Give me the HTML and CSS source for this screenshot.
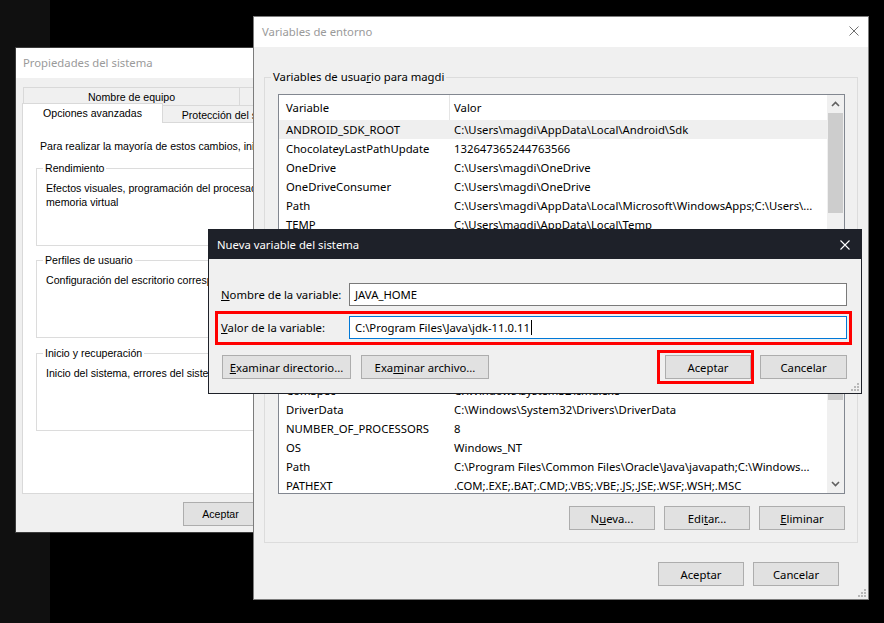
FILE: index.html
```html
<!DOCTYPE html>
<html lang="es">
<head>
<meta charset="utf-8">
<title>Variables de entorno</title>
<link rel="stylesheet" href="styles.css">
</head>
<body>
<div class="desktop">

  <section class="win sysprops">
    <header class="titlebar light sp-title"><span class="title inactive">Propiedades del sistema</span></header>
    <div class="sp-body">
      <div class="tabrow back">
        <div class="tab t-equipo">Nombre de equipo</div>
        <div class="tab t-hw">Hardware</div>
      </div>
      <div class="tabrow front">
        <div class="tab selected">Opciones avanzadas</div>
        <div class="tab t-prot">Protección del sistema</div>
        <div class="tab t-rem">Acceso remoto</div>
      </div>
      <div class="tabpanel">
        <p class="intro">Para realizar la mayoría de estos cambios, inicie sesión como administrador.</p>
        <div class="gbox wgbox g-rend">
          <div class="gtitle">Rendimiento</div>
          <p class="gtext">Efectos visuales, programación del procesador, uso de memoria y<br>memoria virtual</p>
        </div>
        <div class="gbox wgbox g-perf">
          <div class="gtitle">Perfiles de usuario</div>
          <p class="gtext">Configuración del escritorio correspondiente a su inicio de sesión</p>
        </div>
        <div class="gbox wgbox g-ini">
          <div class="gtitle">Inicio y recuperación</div>
          <p class="gtext">Inicio del sistema, errores del sistema e información de depuración</p>
        </div>
      </div>
      <div class="sp-footer">
        <button class="btn sbtn">Aceptar</button>
        <button class="btn sbtn">Cancelar</button>
        <button class="btn sbtn">Aplicar</button>
      </div>
    </div>
  </section>

  <section class="win envwin">
    <header class="titlebar light env-title">
      <span class="title inactive">Variables de entorno</span>
      <svg class="xicon" width="10" height="10" viewBox="0 0 10 10"><path d="M0.5 0.5 L9.5 9.5 M9.5 0.5 L0.5 9.5" stroke="#707070" stroke-width="1" fill="none"/></svg>
    </header>
    <div class="env-body">
      <div class="gbox egbox g-user">
        <div class="gtitle">Variables de usua<u>r</u>io para magdi</div>
        <div class="listview lv-user">
          <div class="lv-main">
            <div class="lv-head"><div class="c1">Variable</div><div class="c2">Valor</div></div>
            <div class="lv-row sel"><div class="c1">ANDROID_SDK_ROOT</div><div class="c2">C:\Users\magdi\AppData\Local\Android\Sdk</div></div>
            <div class="lv-row"><div class="c1">ChocolateyLastPathUpdate</div><div class="c2">132647365244763566</div></div>
            <div class="lv-row"><div class="c1">OneDrive</div><div class="c2">C:\Users\magdi\OneDrive</div></div>
            <div class="lv-row"><div class="c1">OneDriveConsumer</div><div class="c2">C:\Users\magdi\OneDrive</div></div>
            <div class="lv-row"><div class="c1">Path</div><div class="c2">C:\Users\magdi\AppData\Local\Microsoft\WindowsApps;C:\Users\...</div></div>
            <div class="lv-row"><div class="c1">TEMP</div><div class="c2">C:\Users\magdi\AppData\Local\Temp</div></div>
            <div class="lv-row"><div class="c1">TMP</div><div class="c2">C:\Users\magdi\AppData\Local\Temp</div></div>
          </div>
          <div class="vscroll">
            <div class="arrow"><svg width="9" height="6" viewBox="0 0 9 6"><path d="M1 5 L4.5 1.5 L8 5" fill="none" stroke="#606060" stroke-width="1.6"/></svg></div>
            <div class="track"><div class="thumb thumb-user"></div></div>
            <div class="arrow"><svg width="9" height="6" viewBox="0 0 9 6"><path d="M1 1 L4.5 4.5 L8 1" fill="none" stroke="#606060" stroke-width="1.6"/></svg></div>
          </div>
        </div>
        <div class="btnrow gbtn-user">
          <button class="btn wbtn">N<u>u</u>eva...</button>
          <button class="btn wbtn">Edi<u>t</u>ar...</button>
          <button class="btn wbtn"><u>E</u>liminar</button>
        </div>
      </div>

      <div class="gbox egbox g-sys">
        <div class="gtitle">Variables del <u>s</u>istema</div>
        <div class="listview lv-sys">
          <div class="lv-main">
            <div class="lv-head"><div class="c1">Variable</div><div class="c2">Valor</div></div>
            <div class="lv-row"><div class="c1">ComSpec</div><div class="c2">C:\Windows\system32\cmd.exe</div></div>
            <div class="lv-row"><div class="c1">DriverData</div><div class="c2">C:\Windows\System32\Drivers\DriverData</div></div>
            <div class="lv-row"><div class="c1">NUMBER_OF_PROCESSORS</div><div class="c2">8</div></div>
            <div class="lv-row"><div class="c1">OS</div><div class="c2">Windows_NT</div></div>
            <div class="lv-row"><div class="c1">Path</div><div class="c2">C:\Program Files\Common Files\Oracle\Java\javapath;C:\Windows...</div></div>
            <div class="lv-row"><div class="c1">PATHEXT</div><div class="c2">.COM;.EXE;.BAT;.CMD;.VBS;.VBE;.JS;.JSE;.WSF;.WSH;.MSC</div></div>
            <div class="lv-row"><div class="c1">PROCESSOR_ARCHITECTURE</div><div class="c2">AMD64</div></div>
          </div>
          <div class="vscroll">
            <div class="arrow"><svg width="9" height="6" viewBox="0 0 9 6"><path d="M1 5 L4.5 1.5 L8 5" fill="none" stroke="#606060" stroke-width="1.6"/></svg></div>
            <div class="track"><div class="thumb thumb-sys"></div></div>
            <div class="arrow"><svg width="9" height="6" viewBox="0 0 9 6"><path d="M1 1 L4.5 4.5 L8 1" fill="none" stroke="#606060" stroke-width="1.6"/></svg></div>
          </div>
        </div>
        <div class="btnrow gbtn-sys">
          <button class="btn wbtn">N<u>u</u>eva...</button>
          <button class="btn wbtn">Edi<u>t</u>ar...</button>
          <button class="btn wbtn"><u>E</u>liminar</button>
        </div>
      </div>

      <div class="env-footer">
        <button class="btn wbtn">Aceptar</button>
        <button class="btn wbtn">Cancelar</button>
      </div>
    </div>
    <svg class="grip" width="8" height="8" viewBox="0 0 8 8"><g fill="#b8b8b8"><rect x="6" y="0" width="2" height="2"/><rect x="3" y="3" width="2" height="2"/><rect x="6" y="3" width="2" height="2"/><rect x="0" y="6" width="2" height="2"/><rect x="3" y="6" width="2" height="2"/><rect x="6" y="6" width="2" height="2"/></g></svg>
  </section>

  <section class="win dialog">
    <header class="titlebar dark dlg-title">
      <span class="title">Nueva variable del sistema</span>
      <svg class="xicon" width="10" height="10" viewBox="0 0 10 10"><path d="M0.5 0.5 L9.5 9.5 M9.5 0.5 L0.5 9.5" stroke="#ffffff" stroke-width="1.1" fill="none"/></svg>
    </header>
    <div class="dlg-body">
      <div class="field">
        <label class="flabel"><u>N</u>ombre de la variable:</label>
        <div class="input">JAVA_HOME</div>
      </div>
      <div class="field highlight">
        <label class="flabel"><u>V</u>alor de la variable:</label>
        <div class="input focus">C:\Program Files\Java\jdk-11.0.11<span class="caret"></span></div>
      </div>
      <div class="dlg-buttons">
        <button class="btn b-dir"><u>E</u>xaminar directorio...</button>
        <button class="btn b-file">Exa<u>m</u>inar archivo...</button>
        <div class="spacer"></div>
        <div class="mark"><button class="btn wbtn">Aceptar</button></div>
        <button class="btn b-cancel">Cancelar</button>
      </div>
    </div>
    <svg class="grip" width="8" height="8" viewBox="0 0 8 8"><g fill="#b8b8b8"><rect x="6" y="0" width="2" height="2"/><rect x="3" y="3" width="2" height="2"/><rect x="6" y="3" width="2" height="2"/><rect x="0" y="6" width="2" height="2"/><rect x="3" y="6" width="2" height="2"/><rect x="6" y="6" width="2" height="2"/></g></svg>
  </section>

</div>
</body>
</html>
```

FILE: styles.css
```css
* { box-sizing: border-box; }
html, body { margin: 0; padding: 0; }
body {
  width: 884px;
  height: 623px;
  overflow: hidden;
  background: linear-gradient(to right, #101010 0, #101010 50px, #000 50px);
  font-family: "Noto Sans", "Liberation Sans", sans-serif;
  font-size: 11.3px;
  color: #000;
}
p { margin: 0; }
u { text-underline-offset: 1px; }
button { font: inherit; color: #000; margin: 0; }

.desktop { position: relative; width: 884px; height: 623px; }

/* windows on the desktop */
.win {
  position: absolute;
  background: #f0f0f0;
  display: flex;
  flex-direction: column;
  overflow: hidden;
}
.sysprops { left: 15px; top: 47px; width: 412px; height: 486px; border: 1px solid #3c3c3c; z-index: 1; }
.envwin { left: 253px; top: 16px; width: 616px; height: 584px; border: 1px solid #7c7c7c; z-index: 2; }
.dialog { left: 208px; top: 229px; width: 654px; height: 165px; border: 1px solid #1e2129; z-index: 3; }

.titlebar {
  flex: none;
  height: 30px;
  display: flex;
  align-items: center;
  justify-content: space-between;
  white-space: nowrap;
}
.titlebar.light { background: #fff; padding-bottom: 2px; }
.titlebar.dark { background: #1e2129; color: #fff; }
.title.inactive { color: #9a9a9a; }
.sp-title { padding-left: 7px; }
.env-title { padding-left: 8px; padding-right: 9px; }
.dlg-title { height: 29px; padding: 0 11px 0 8px; }
.xicon { display: block; flex: none; }

.grip { position: absolute; right: 2px; bottom: 2px; }

/* ---------- Propiedades del sistema ---------- */
.sp-body {
  padding: 9px 6px 0 6px;
  font-family: "Liberation Sans", "Noto Sans", sans-serif;
  font-size: 10.6px;
}
.tabrow { display: flex; white-space: nowrap; }
.tabrow.back { height: 18px; padding-left: 1px; }
.tabrow.front { height: 17px; align-items: flex-end; }
.tab {
  flex: none;
  background: #f0f0f0;
  border: 1px solid #d9d9d9;
  border-bottom: none;
  text-align: center;
  overflow: hidden;
}
.tabrow.back .tab { height: 18px; line-height: 18px; }
.t-equipo { width: 217px; }
.t-hw { width: 181px; margin-left: -1px; }
.tab.selected {
  position: relative;
  z-index: 1;
  width: 141px;
  height: 20px;
  line-height: 19px;
  margin-bottom: -1px;
  background: #fff;
}
.t-prot { width: 146px; height: 17px; line-height: 19px; margin-left: -1px; }
.t-rem { width: 111px; height: 17px; line-height: 19px; margin-left: -1px; }

.tabpanel {
  height: 372px;
  background: #fff;
  border: 1px solid #d9d9d9;
  padding: 15px 13px 0 13px;
  white-space: nowrap;
}
.intro { line-height: 16px; margin-left: 4px; }

.gbox { border: 1px solid #dcdcdc; }
.gtitle {
  width: fit-content;
  height: 16px;
  line-height: 16px;
  padding: 0 2px;
  white-space: nowrap;
}
.wgbox { height: 78px; padding: 0 8px 0 9px; }
.wgbox .gtitle { background: #fff; margin: -9px 0 0 -3px; }
.g-rend { margin-top: 14px; }
.g-perf { margin-top: 14px; }
.g-ini { margin-top: 15px; }
.gtext { margin-top: 5px; line-height: 14px; white-space: nowrap; }

.sp-footer { display: flex; justify-content: flex-end; gap: 6px; margin-top: 8px; }
.sbtn { width: 75px; height: 21px; }

/* ---------- buttons ---------- */
.btn {
  flex: none;
  height: 24px;
  padding: 0;
  background: #e1e1e1;
  border: 1px solid #adadad;
  text-align: center;
  white-space: nowrap;
}
.wbtn { width: 86px; }

/* ---------- Variables de entorno ---------- */
.env-body { padding: 30px 10px 0 10px; display: flex; flex-direction: column; }
.egbox { padding: 0 12px 12px 13px; }
.egbox .gtitle { background: #f0f0f0; margin: -9px 0 9px -7px; }
.g-sys { margin-top: 10px; }

.listview {
  display: flex;
  background: #fff;
  border: 1px solid #828790;
}
.lv-user { height: 184px; }
.lv-sys { height: 139px; }
.lv-main { flex: 1; min-width: 0; overflow: hidden; }
.lv-head { display: flex; height: 25px; line-height: 25px; white-space: nowrap; }
.lv-head .c1 { border-right: 1px solid #e5e5e5; }
.lv-row { display: flex; height: 19px; line-height: 19px; white-space: nowrap; }
.lv-row.sel { background: #efefef; }
.c1 { flex: none; width: 171px; padding-left: 7px; overflow: hidden; }
.c2 { flex: 1; min-width: 0; padding-left: 4px; overflow: hidden; }

.vscroll {
  flex: none;
  width: 17px;
  background: #f0f0f0;
  display: flex;
  flex-direction: column;
}
.arrow { flex: none; height: 18px; display: flex; align-items: center; justify-content: center; }
.arrow svg { display: block; }
.track { flex: 1; padding: 0 1px; }
.thumb { background: #cdcdcd; }
.thumb-user { height: 100px; }
.thumb-sys { height: 26px; }

.btnrow { display: flex; justify-content: flex-end; gap: 9px; }
.gbtn-user { margin-top: 13px; }
.gbtn-sys { margin-top: 12px; }

.env-footer { display: flex; justify-content: flex-end; gap: 9px; margin-top: 19px; padding-right: 19px; }

/* ---------- Nueva variable del sistema ---------- */
.dlg-body { padding: 24px 14px 0 12px; }
.field { display: flex; align-items: center; }
.flabel { flex: none; width: 128px; white-space: nowrap; }
.input {
  flex: 1;
  min-width: 0;
  height: 23px;
  line-height: 21px;
  padding-left: 5px;
  background: #fff;
  border: 1px solid #7a7a7a;
  white-space: nowrap;
}
.input.focus { border-color: #0078d7; }
.caret {
  display: inline-block;
  width: 1px;
  height: 15px;
  background: #000;
  vertical-align: middle;
  margin-left: 1px;
  margin-top: -2px;
}
.highlight {
  border: 3px solid #ff0000;
  margin: 5px -5px 0 -6px;
  padding: 2px 2px 3px 3px;
}
.dlg-buttons { display: flex; align-items: center; margin-top: 5px; }
.b-dir { width: 129px; margin-left: 1px; }
.b-file { width: 128px; margin-left: 10px; }
.spacer { flex: 1; }
.mark { flex: none; border: 3px solid #ff0000; padding: 2px 0 2px 5px; }
.mark .btn { display: block; }
.b-cancel { width: 87px; margin-left: 6px; }
```
